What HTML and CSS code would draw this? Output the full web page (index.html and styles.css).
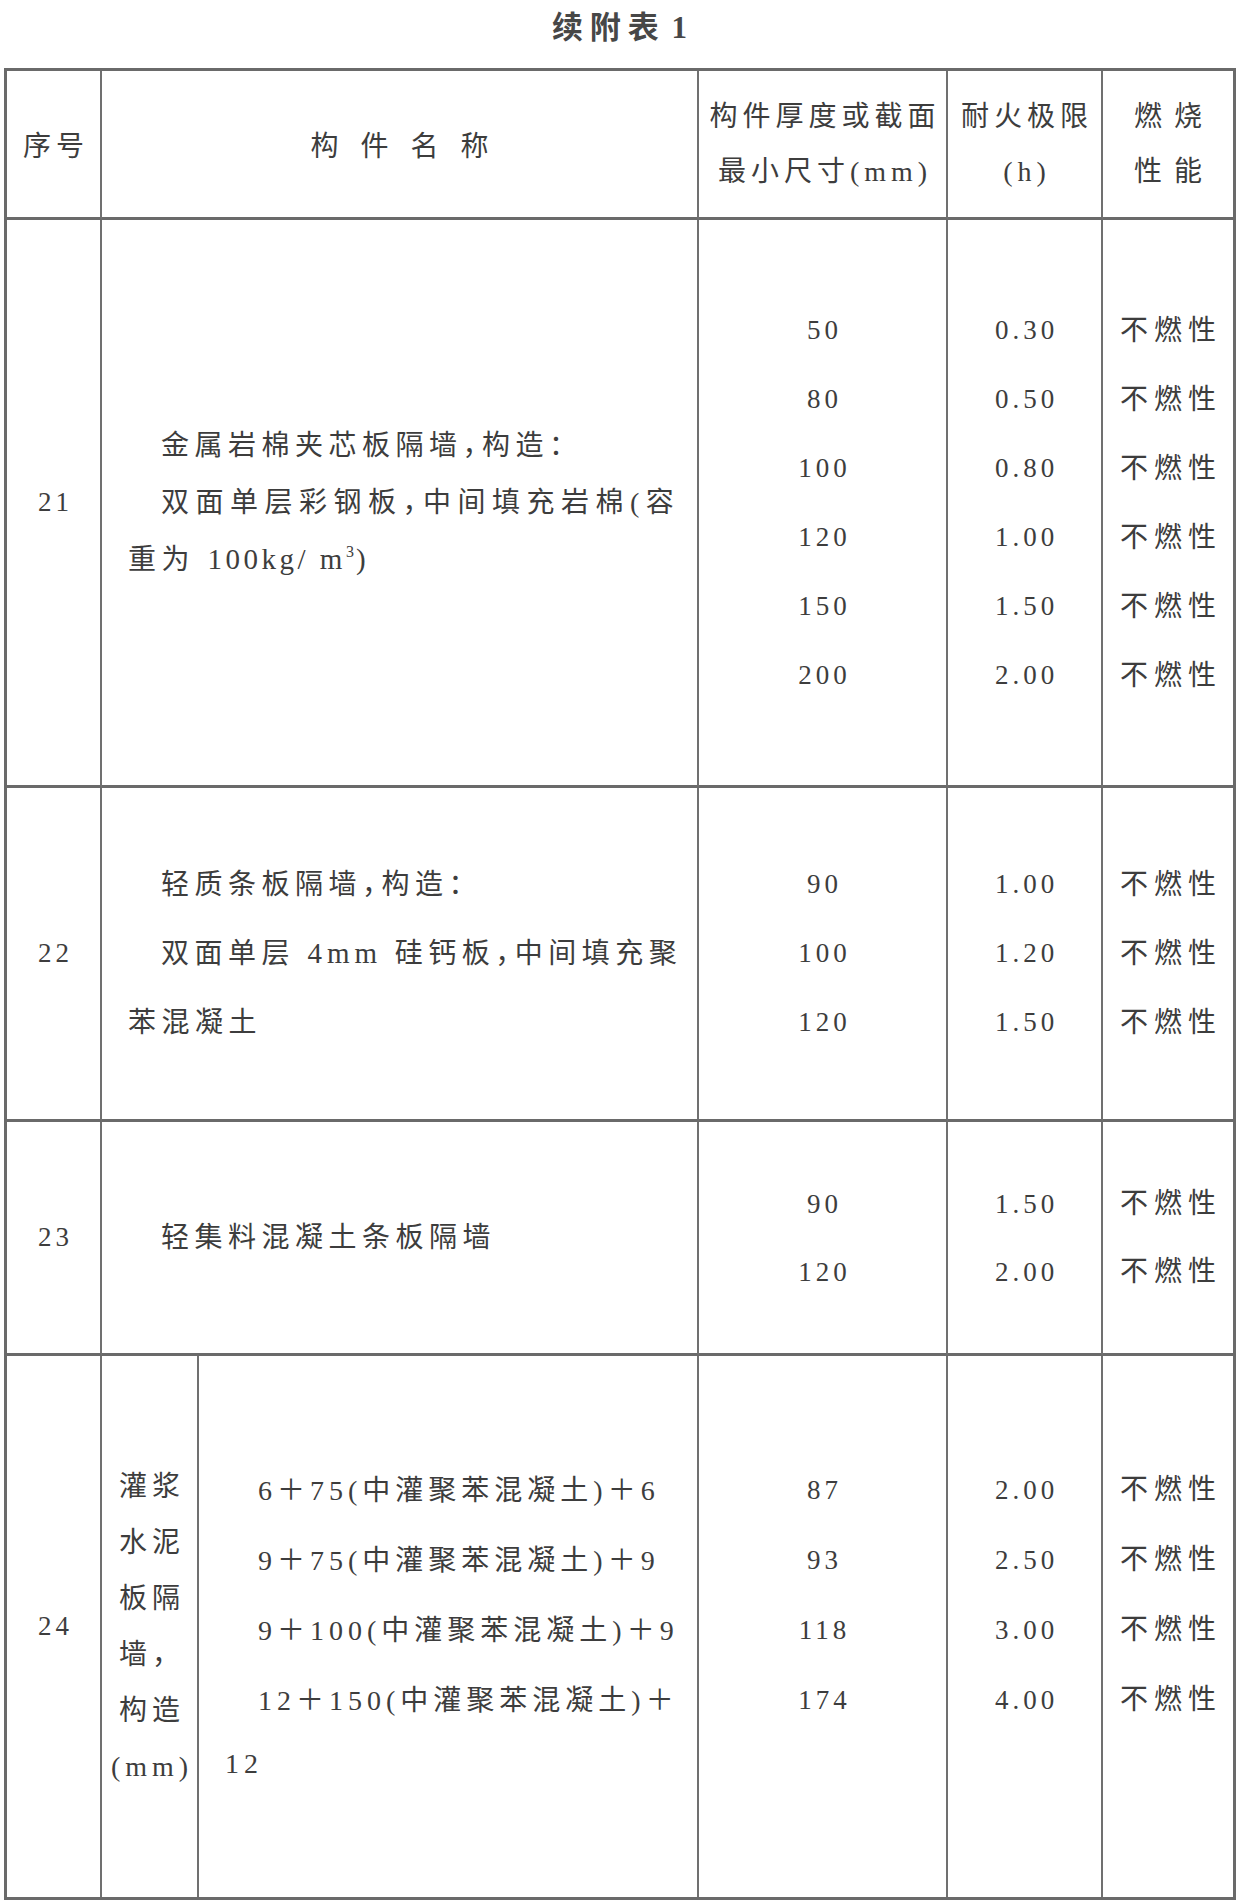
FILE: index.html
```html
<!DOCTYPE html>
<html lang="zh-CN">
<head>
<meta charset="utf-8">
<title>续附表 1</title>
<link rel="stylesheet" href="styles.css">
</head>
<body>
<div class="page">
  <h1 class="title">续附表 1</h1>
  <div class="sheet">
    <!-- header -->
    <div class="cell c-no hd">序号</div>
    <div class="cell c-name hd hd-name">构件名称</div>
    <div class="cell hd hd-two">构件厚度或截面<br>最小尺寸(mm)</div>
    <div class="cell hd hd-two">耐火极限<br>(h)</div>
    <div class="cell hd hd-two hd-burn last-col">燃烧<br>性能</div>

    <!-- 21 -->
    <div class="cell c-no num">21</div>
    <div class="cell c-name desc">
      <div class="desc-body lh57">
        <p>金属岩棉夹芯板隔墙，构造：</p>
        <p><span class="spread">双面单层彩钢板，中间填充岩棉(容</span><br>重为 <span class="lat">100kg/ m<sup>3</sup>)</span></p>
      </div>
    </div>
    <div class="cell num"><div class="vals lh69"><div>50</div><div>80</div><div>100</div><div>120</div><div>150</div><div>200</div></div></div>
    <div class="cell num"><div class="vals lh69"><div>0.30</div><div>0.50</div><div>0.80</div><div>1.00</div><div>1.50</div><div>2.00</div></div></div>
    <div class="cell burn last-col"><div class="vals lh69"><div>不燃性</div><div>不燃性</div><div>不燃性</div><div>不燃性</div><div>不燃性</div><div>不燃性</div></div></div>

    <!-- 22 -->
    <div class="cell c-no num">22</div>
    <div class="cell c-name desc">
      <div class="desc-body lh69">
        <p>轻质条板隔墙，构造：</p>
        <p>双面单层 <span class="lat lat-mm">4mm</span> 硅钙板，中间填充聚<br>苯混凝土</p>
      </div>
    </div>
    <div class="cell num"><div class="vals lh69"><div>90</div><div>100</div><div>120</div></div></div>
    <div class="cell num"><div class="vals lh69"><div>1.00</div><div>1.20</div><div>1.50</div></div></div>
    <div class="cell burn last-col"><div class="vals lh69"><div>不燃性</div><div>不燃性</div><div>不燃性</div></div></div>

    <!-- 23 -->
    <div class="cell c-no num">23</div>
    <div class="cell c-name desc">
      <div class="desc-body lh69">
        <p>轻集料混凝土条板隔墙</p>
      </div>
    </div>
    <div class="cell num"><div class="vals lh68"><div>90</div><div>120</div></div></div>
    <div class="cell num"><div class="vals lh68"><div>1.50</div><div>2.00</div></div></div>
    <div class="cell burn last-col"><div class="vals lh68"><div>不燃性</div><div>不燃性</div></div></div>

    <!-- 24 -->
    <div class="cell c-no num last-row">24</div>
    <div class="cell sub-label last-row">灌浆<br>水泥<br>板隔<br>墙，<br>构造<br>(mm)</div>
    <div class="cell desc formula-cell last-row">
      <div class="desc-body formula">
        <p>6＋75(中灌聚苯混凝土)＋6</p>
        <p>9＋75(中灌聚苯混凝土)＋9</p>
        <p>9＋100(中灌聚苯混凝土)＋9</p>
        <p>12＋150(中灌聚苯混凝土)＋<br>12</p>
      </div>
    </div>
    <div class="cell num last-row"><div class="vals lh70 tail"><div>87</div><div>93</div><div>118</div><div>174</div></div></div>
    <div class="cell num last-row"><div class="vals lh70 tail"><div>2.00</div><div>2.50</div><div>3.00</div><div>4.00</div></div></div>
    <div class="cell burn last-col last-row"><div class="vals lh70 tail"><div>不燃性</div><div>不燃性</div><div>不燃性</div><div>不燃性</div></div></div>
  </div>
</div>
</body>
</html>
```

FILE: styles.css
```css
html, body {
  margin: 0;
  padding: 0;
  background: #ffffff;
}

body {
  color: #3d3d3d;
  font-family: "Liberation Serif", "Noto Sans CJK SC", serif;
}

.page {
  width: 1239px;
}

.title {
  margin: 0;
  height: 68px;
  line-height: 55px;
  text-align: center;
  font-family: "Liberation Serif", "Noto Sans CJK SC", serif;
  font-size: 31px;
  font-weight: 700;
  letter-spacing: 7px;
  word-spacing: -9px;
  padding-left: 7px;
  box-sizing: border-box;
  color: #474747;
}

.sheet {
  display: grid;
  grid-template-columns: 95px 97px 500px 249px 155px 130px;
  grid-template-rows: 149px 568px 334px 234px 541px;
  width: 1232px;
  margin-left: 4px;
  border: 3px solid #6a6a6a;
  box-sizing: border-box;
}

.cell {
  box-sizing: border-box;
  border-right: 2px solid #707070;
  border-bottom: 3px solid #6a6a6a;
  display: flex;
  align-items: center;
  justify-content: center;
  font-size: 28px;
  letter-spacing: 5px;
  text-align: center;
  min-width: 0;
}

.last-col {
  border-right: 0;
}

.last-row {
  border-bottom: 0;
}

.c-name {
  grid-column: span 2;
}

/* header */
.hd {
  padding-left: 5px;
}

.hd-name {
  letter-spacing: 22px;
  padding-left: 22px;
}

.hd-two {
  line-height: 55px;
}

.hd-burn {
  letter-spacing: 12px;
  padding-left: 12px;
}

/* numbers */
.num {
  font-size: 27px;
  letter-spacing: 4px;
  padding-left: 4px;
}

.burn {
  font-size: 28px;
  letter-spacing: 6px;
  padding-left: 6px;
}

.vals {
  width: 100%;
}

.lh68 { line-height: 68px; }
.lh69 { line-height: 69px; }
.lh70 { line-height: 70px; }
.lh57 { line-height: 57px; }

.vals.tail {
  padding-bottom: 63px;
}

/* description */
.desc {
  justify-content: flex-start;
  text-align: left;
  padding: 0 6px 0 26px;
  letter-spacing: 5.5px;
  font-feature-settings: "halt";
}

.desc-body {
  width: 100%;
}

.desc-body p {
  margin: 0;
  text-indent: 33px;
}

.spread {
  letter-spacing: 6.5px;
}

.lat {
  font-size: 29px;
  letter-spacing: 3.5px;
}

.lat-mm {
  letter-spacing: 5px;
}

.desc-body sup {
  font-size: 16px;
  line-height: 0;
  vertical-align: 12px;
  letter-spacing: 2px;
}

.formula-cell {
  font-feature-settings: normal;
}

.formula {
  letter-spacing: 5px;
}

.formula p {
  line-height: 63px;
  margin-bottom: 7px;
}

.formula p:last-child {
  margin-bottom: 0;
}

.sub-label {
  line-height: 56px;
  padding-left: 5px;
}
```
